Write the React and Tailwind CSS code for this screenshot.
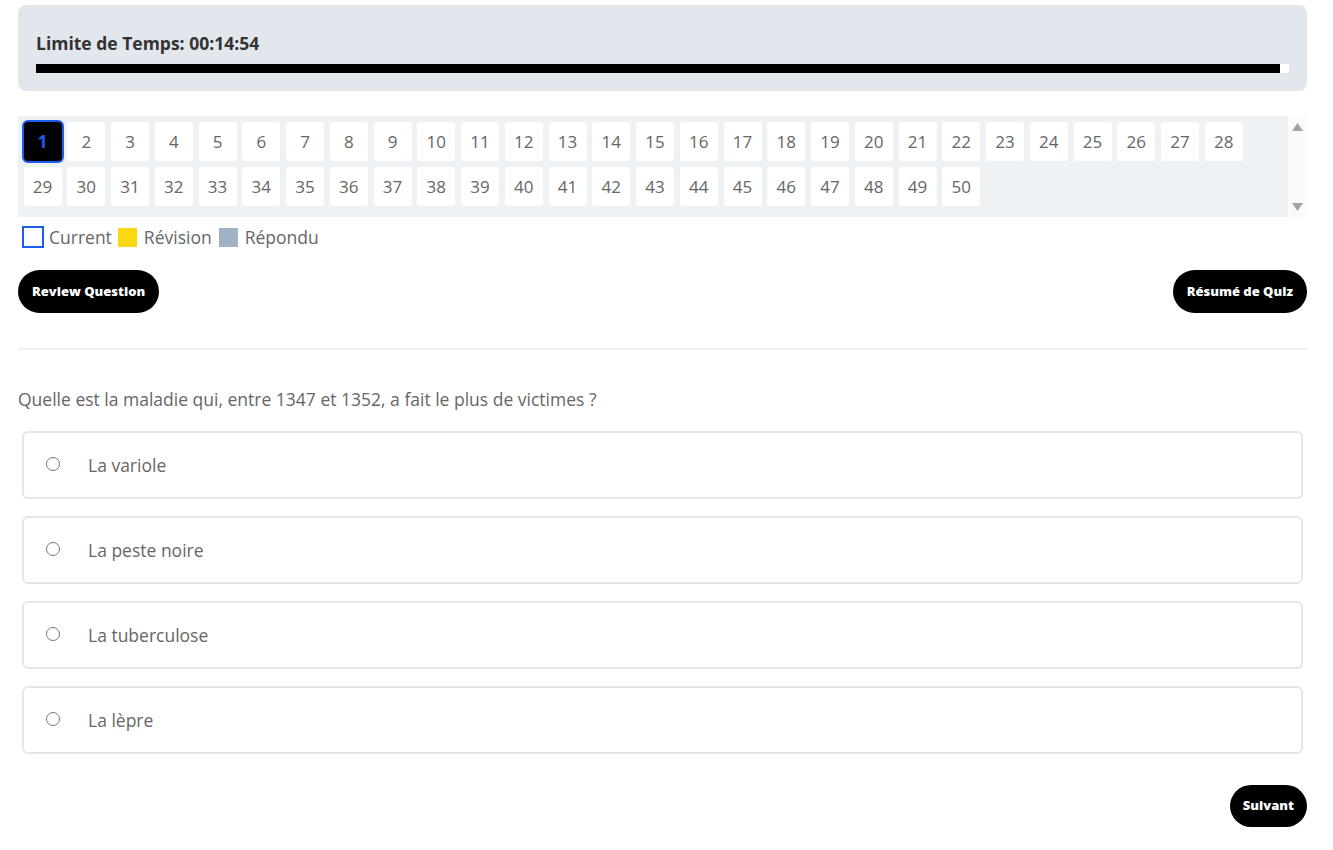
import React from 'react';

const options = ['La variole', 'La peste noire', 'La tuberculose', 'La lèpre'];
const numbers = Array.from({ length: 50 }, (_, i) => i + 1);

const Arrow = ({ down }) => (
  <svg width="11" height="8" viewBox="0 0 11 8" className="block">
    <path d={down ? 'M0 0 H11 L5.5 8 Z' : 'M5.5 0 L11 8 H0 Z'} fill="#a3a3a3" />
  </svg>
);

const App = () => {
  return (
    <div className="min-h-screen bg-white pl-[18px] pr-[26px] pt-[5px] text-[#666] font-['Open_Sans',sans-serif]">
      {/* Timer */}
      <div className="rounded-[8px] bg-[#e2e6ed] px-[18px] pt-[26px] pb-[18px]">
        <p className="text-[17.5px] leading-[24px] font-bold text-[#333]">Limite de Temps: 00:14:54</p>
        <div className="mt-[9px] flex h-[9px] bg-white">
          <div className="h-full bg-black" style={{ width: `${(1244 / 1253) * 100}%` }} />
        </div>
      </div>

      {/* Question navigator */}
      <div className="mt-[25px] flex h-[101px]">
        <div className="flex-1 bg-[#eff2f5] pl-[5.5px] pt-[6px]">
          <div className="grid grid-cols-[repeat(28,38px)] gap-x-[5.75px] gap-y-[6px]">
            {numbers.map((n) =>
              n === 1 ? (
                <button
                  key={n}
                  className="h-[39px] w-[38px] rounded-[4px] bg-black text-[17px] font-bold text-[#1d5cf5] ring-2 ring-[#1d5cf5]"
                >
                  {n}
                </button>
              ) : (
                <button key={n} className="h-[39px] w-[38px] rounded-[3px] bg-white text-[17px] text-[#666]">
                  {n}
                </button>
              )
            )}
          </div>
        </div>
        <div className="flex w-[19px] flex-col items-center justify-between bg-[#fafafa] pt-[7px] pb-[6px]">
          <Arrow />
          <Arrow down />
        </div>
      </div>

      {/* Legend */}
      <div className="mt-[8px] flex items-center pl-[4px] text-[17.5px] leading-[24px]">
        <span className="h-[22px] w-[22px] border-2 border-[#1d5cf5]" />
        <span className="ml-[5px]">Current</span>
        <span className="ml-[6px] h-[19px] w-[19px] bg-[#fdd712]" />
        <span className="ml-[7px]">Révision</span>
        <span className="ml-[7px] h-[19px] w-[19px] bg-[#a0b3c6]" />
        <span className="ml-[7px]">Répondu</span>
      </div>

      {/* Actions */}
      <div className="mt-[21px] flex items-center justify-between">
        <button className="h-[43px] rounded-full bg-black px-[14px] text-[13px] font-extrabold text-white">
          Review Question
        </button>
        <button className="h-[43px] rounded-full bg-black px-[14px] text-[13px] font-extrabold text-white">
          Résumé de Quiz
        </button>
      </div>

      <div className="mt-[35px] h-[2px] bg-[#eef1f5]" />

      {/* Question */}
      <p className="mt-[37px] text-[17.5px] leading-[24px]">
        Quelle est la maladie qui, entre 1347 et 1352, a fait le plus de victimes ?
      </p>

      <div className="mx-[4px] mt-[20px] flex flex-col gap-[17px]">
        {options.map((opt) => (
          <label
            key={opt}
            className="flex h-[68px] items-center rounded-[6px] border-2 border-[#e3e7ec] pl-[22px] text-[17.5px] leading-[24px]"
          >
            <span className="-mt-[3px] h-[14px] w-[14px] rounded-full border border-[#777] bg-white" />
            <span className="ml-[28px]">{opt}</span>
          </label>
        ))}
      </div>

      <div className="mt-[31px] flex justify-end">
        <button className="h-[42px] rounded-full bg-black px-[13px] text-[13px] font-extrabold text-white">
          Suivant
        </button>
      </div>
    </div>
  );
};

export default App;
